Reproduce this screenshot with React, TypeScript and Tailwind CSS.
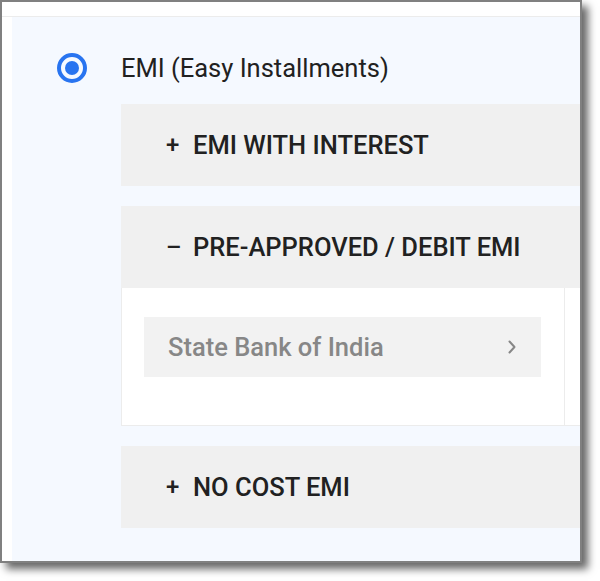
import React from "react";

function Header({ sign, label }: { sign: string; label: string }) {
  return (
    <div className="h-[82px] bg-[#f0f0f0] flex items-center pl-[45px] shrink-0">
      <span className="w-[27px] text-[24px] font-medium text-[#212121]">{sign}</span>
      <span className="text-[25.5px] font-medium text-[#212121] whitespace-nowrap">{label}</span>
    </div>
  );
}

export default function App() {
  return (
    <div className="w-[600px] h-[581px] bg-white" style={{ fontFamily: "Roboto, 'Liberation Sans', sans-serif" }}>
      <div className="w-[582px] h-[563px] border-2 border-[#808080] shadow-[6px_6px_8px_rgba(0,0,0,0.6)] bg-white overflow-hidden flex flex-col">
        <div className="h-[15px] shrink-0 bg-white border-b border-[#ececec]" />
        <div className="flex-1 ml-[10px] bg-[#f5f9ff] flex pt-[36px] min-w-0">
          <div className="w-[109px] shrink-0 pl-[45px]">
            <div className="h-[30px] flex items-center">
              <div className="w-[30px] h-[30px] rounded-full border-[4px] border-[#2874f0] flex items-center justify-center">
                <div className="w-[14px] h-[14px] rounded-full bg-[#2874f0]" />
              </div>
            </div>
          </div>
          <div className="flex-1 flex flex-col min-w-0">
            <div className="h-[30px] flex items-center text-[25.5px] text-[#212121] whitespace-nowrap">
              EMI (Easy Installments)
            </div>
            <div className="mt-[21px]">
              <Header sign="+" label="EMI WITH INTEREST" />
            </div>
            <div className="mt-[20px] flex flex-col">
              <Header sign="–" label="PRE-APPROVED / DEBIT EMI" />
              <div className="h-[138px] bg-white border-l border-b border-[#ececec] flex">
                <div className="w-[443px] shrink-0 border-r border-[#ececec] pl-[22px] pr-[23px] pt-[29px]">
                  <div className="h-[60px] bg-[#f2f2f2] flex items-center justify-between pl-[24px] pr-[25px]">
                    <span className="text-[25.5px] font-medium text-[#878787] whitespace-nowrap">State Bank of India</span>
                    <svg width="8" height="14" viewBox="0 0 8 14" fill="none">
                      <polyline points="1.5,1.5 6.5,7 1.5,12.5" stroke="#878787" strokeWidth="2" strokeLinecap="round" strokeLinejoin="round" />
                    </svg>
                  </div>
                </div>
                <div className="flex-1" />
              </div>
            </div>
            <div className="mt-[20px]">
              <Header sign="+" label="NO COST EMI" />
            </div>
          </div>
        </div>
      </div>
    </div>
  );
}
